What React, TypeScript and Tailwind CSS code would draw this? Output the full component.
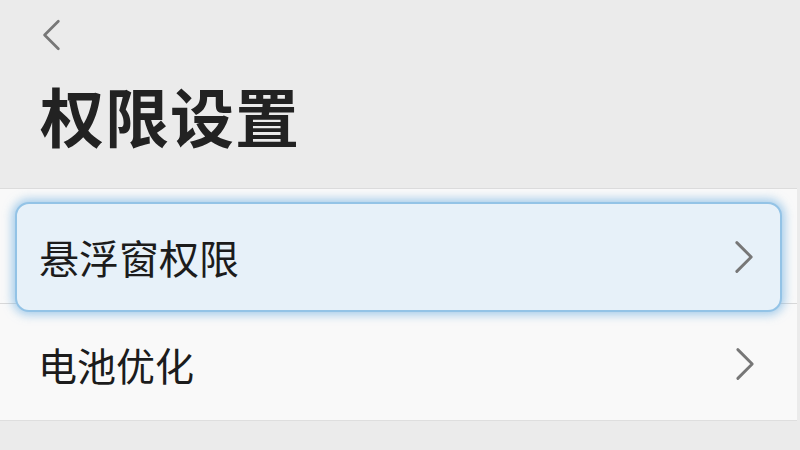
const Chevron = ({ dir, className }: { dir: "left" | "right"; className?: string }) => (
  <svg className={className} viewBox="0 0 24 36" fill="none" stroke="currentColor" strokeWidth={3} strokeLinecap="round" strokeLinejoin="round">
    {dir === "left" ? <path d="M20 3 L5 18 L20 33" /> : <path d="M4 3 L19 18 L4 33" />}
  </svg>
);

export default function App() {
  return (
    <div
      className="w-[800px] h-[450px] overflow-hidden bg-[#ebebeb] flex flex-col"
      style={{ fontFamily: '"Noto Sans CJK SC", "Noto Sans", sans-serif' }}
    >
      <div className="h-[188px] px-[40px] pt-[18px] flex flex-col">
        <Chevron dir="left" className="w-[22px] h-[34px] text-[#777]" />
        <h1 className="mt-[22px] text-[64px] leading-[80px] font-bold text-[#222] tracking-[1px]">权限设置</h1>
      </div>

      <div className="w-[797px] bg-[#f9f9f9] border-t border-[#dcdcdc] flex flex-col">
        <div className="h-[115px] border-b border-[#d8d8d8] px-[15px] pt-[13px] relative z-10">
          <div className="w-full h-[110px] rounded-[14px] bg-[#e7f1f9] border-2 border-[#93c3e6] shadow-[0_0_10px_3px_rgba(110,175,225,0.6)] flex items-center justify-between pl-[22px] pr-[24px]">
            <span className="text-[40px] text-[#1c1c1c]">悬浮窗权限</span>
            <Chevron dir="right" className="w-[23px] h-[36px] text-[#777]" />
          </div>
        </div>
        <div className="h-[117px] border-b border-[#dedede] flex items-center justify-between pl-[38px] pr-[40px] pt-[4px]">
          <span className="text-[39px] text-[#1c1c1c]">电池优化</span>
          <Chevron dir="right" className="w-[23px] h-[36px] text-[#777]" />
        </div>
      </div>
    </div>
  );
}
